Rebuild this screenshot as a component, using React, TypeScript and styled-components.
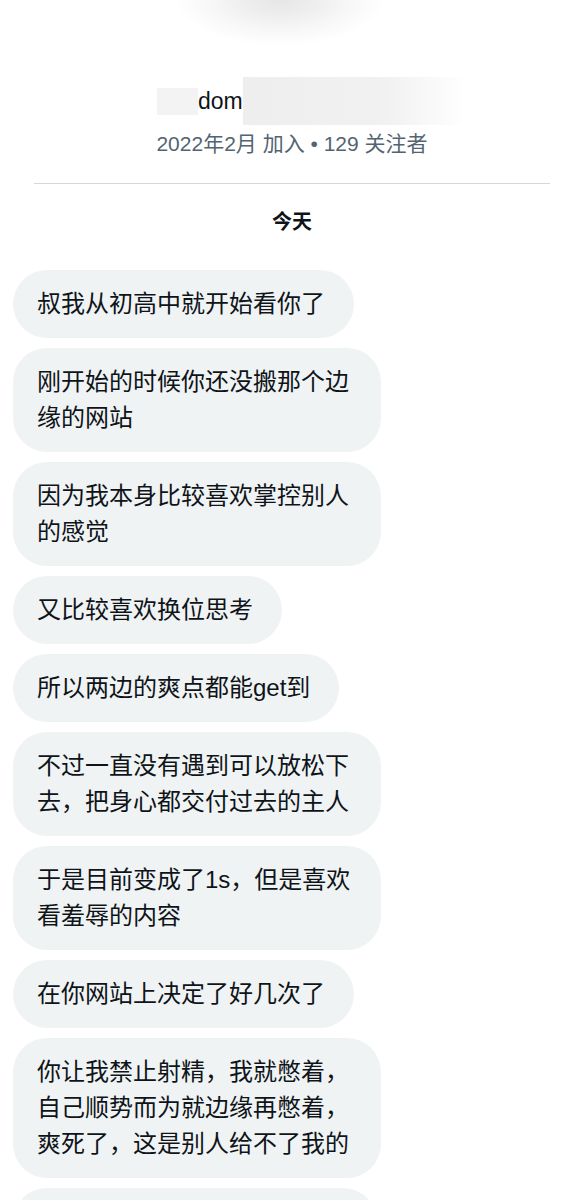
import { createGlobalStyle, styled } from 'styled-components'

const GlobalStyle = createGlobalStyle`
	html, body {
		margin: 0;
		padding: 0;
		background: #fff;
	}
	body {
		font-family: 'Liberation Sans', 'Noto Sans CJK SC', sans-serif;
		color: #0f1419;
	}
`

const messages = [
	'叔我从初高中就开始看你了',
	'刚开始的时候你还没搬那个边缘的网站',
	'因为我本身比较喜欢掌控别人的感觉',
	'又比较喜欢换位思考',
	'所以两边的爽点都能get到',
	'不过一直没有遇到可以放松下去，把身心都交付过去的主人',
	'于是目前变成了1s，但是喜欢看羞辱的内容',
	'在你网站上决定了好几次了',
	'你让我禁止射精，我就憋着，自己顺势而为就边缘再憋着，爽死了，这是别人给不了我的',
]

const Page = styled.div`
	width: 567px;
	min-height: 1200px;
	overflow: hidden;
	display: flex;
	flex-direction: column;
`

const Profile = styled.div`
	display: flex;
	flex-direction: column;
`

// blurred bottom edge of the avatar
const AvatarFade = styled.div`
	width: 210px;
	height: 46px;
	margin-left: 175px;
	background: radial-gradient(
		ellipse 50% 100% at 50% 0%,
		#e6e6e6 0%,
		#eeeeee 35%,
		#f7f7f7 65%,
		#fff 100%
	);
`

const NameRow = styled.div`
	margin-top: 31px;
	margin-left: 157px;
	height: 48px;
	display: flex;
	align-items: center;
`

const Handle = styled.span`
	font-size: 23px;
	line-height: 48px;
	color: #0f1419;
`

const Redacted = styled.div<{ $width: number; $height: number; $fade?: boolean }>`
	width: ${p => p.$width}px;
	height: ${p => p.$height}px;
	background: ${p =>
		p.$fade
			? 'linear-gradient(to right, #eeeeee 0%, #f1f1f1 65%, #fff 100%)'
			: '#f3f3f3'};
	align-self: ${p => (p.$fade ? 'flex-start' : 'center')};
`

const JoinInfo = styled.div`
	margin-top: 6px;
	padding-left: 17px;
	text-align: center;
	font-size: 21px;
	line-height: 26px;
	color: #536471;
`

const Divider = styled.div`
	margin: 26px 17px 0 34px;
	height: 1px;
	background: #cfd9de;
`

const DayLabel = styled.div`
	margin-top: 25px;
	padding-left: 17px;
	text-align: center;
	font-size: 20px;
	line-height: 26px;
	font-weight: 700;
	color: #0f1419;
`

const Thread = styled.div`
	margin-top: 35px;
	padding: 0 13px;
	display: flex;
	flex-direction: column;
	align-items: flex-start;
	gap: 10px;
`

const Bubble = styled.div<{ $placeholder?: boolean }>`
	box-sizing: border-box;
	max-width: 368px;
	padding: 16px 29px 16px 24px;
	border-radius: 34px;
	background: #eff3f4;
	font-size: 24px;
	line-height: 36px;
	color: #0f1419;
	line-break: strict;
	${p =>
		p.$placeholder &&
		`
		width: 364px;
		height: 104px;
	`}
`

export default function App() {
	return (
		<>
			<GlobalStyle />
			<Page>
				<Profile>
					<AvatarFade />
					<NameRow>
						<Redacted $width={41} $height={27} />
						<Handle>dom</Handle>
						<Redacted $width={222} $height={48} $fade />
					</NameRow>
					<JoinInfo>2022年2月 加入 • 129 关注者</JoinInfo>
				</Profile>
				<Divider />
				<DayLabel>今天</DayLabel>
				<Thread>
					{messages.map((text, i) => (
						<Bubble key={i}>{text}</Bubble>
					))}
					<Bubble $placeholder />
				</Thread>
			</Page>
		</>
	)
}
